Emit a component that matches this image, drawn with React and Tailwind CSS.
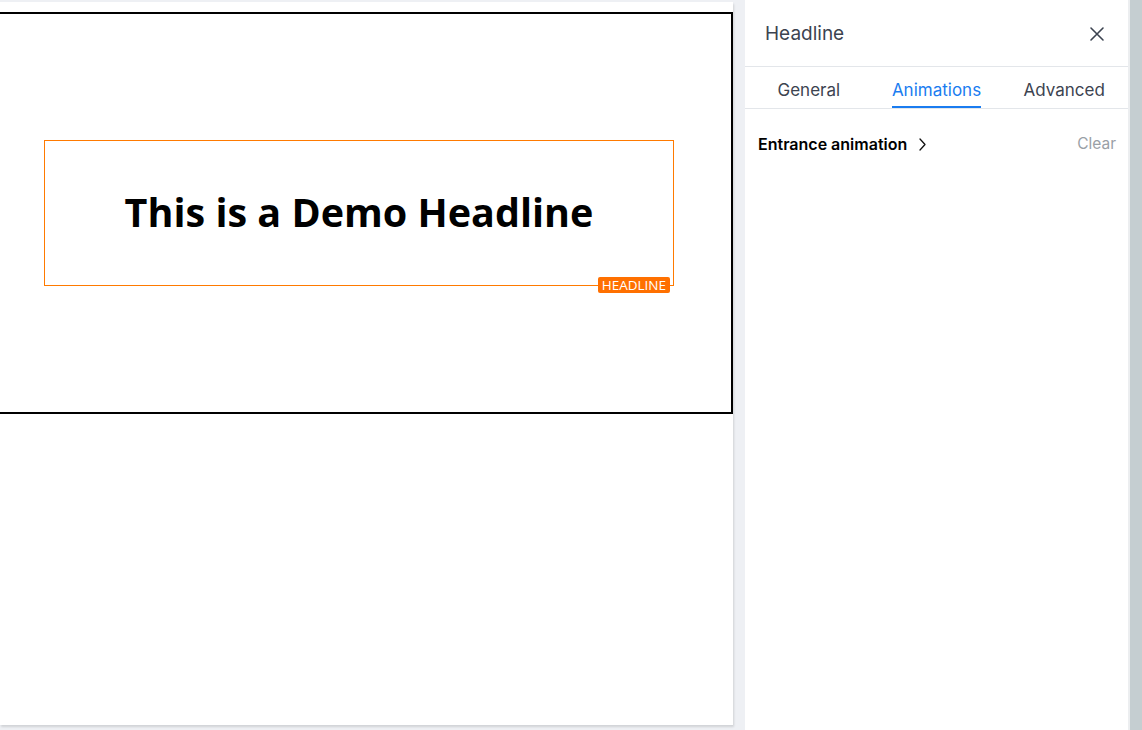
import React from 'react';

const App = () => {
  return (
    <div className="flex h-[730px] w-[1142px] overflow-hidden bg-[#eef0f4]">
      {/* Canvas area */}
      <div className="w-[745px] shrink-0 pt-[2px]">
        <div className="h-[723px] w-[733px] overflow-hidden bg-white shadow-[1px_2px_2px_rgba(0,0,0,0.12)]">
          <div className="relative ml-[-10px] mt-[10px] h-[402px] w-[743px] border-2 border-black">
            {/* Selected headline block */}
            <div className="relative ml-[52px] mt-[126px] flex h-[146px] w-[630px] items-center justify-center border border-[#ff7a00]">
              <h1 className="font-['Open_Sans',sans-serif] text-[39.5px] font-bold leading-none text-black">
                This is a Demo Headline
              </h1>
              <span className="absolute right-[3px] top-[136px] rounded-[2px] bg-[#ff7000] px-[4px] font-['Open_Sans',sans-serif] text-[13.5px] leading-[16px] text-white">
                HEADLINE
              </span>
            </div>
          </div>
        </div>
      </div>

      {/* Settings panel */}
      <div className="flex w-[383px] shrink-0 flex-col bg-white font-['Inter',sans-serif]">
        <div className="flex h-[67px] items-center justify-between border-b border-[#e3e6ea] pl-[20px] pr-[23px] pt-[2px]">
          <span className="text-[19px] text-[#3c4350]">Headline</span>
          <svg width="16" height="16" viewBox="0 0 16 16" fill="none" stroke="#3c4350" strokeWidth="1.6" strokeLinecap="round">
            <path d="M2 2l12 12M14 2L2 14" />
          </svg>
        </div>
        <div className="flex h-[42px] border-b border-[#e3e6ea]">
          {['General', 'Animations', 'Advanced'].map((t) => (
            <div key={t} className="flex flex-1 justify-center">
              <span
                className={`flex items-center border-b-2 pt-[9px] text-[17px] ${
                  t === 'Animations' ? 'border-[#1a7cf0] text-[#1a7cf0]' : 'border-transparent text-[#3c4350]'
                }`}
              >
                {t}
              </span>
            </div>
          ))}
        </div>
        <div className="flex h-[70px] items-center justify-between pl-[13px] pr-[12px]">
          <div className="flex items-center gap-[10px]">
            <span className="text-[16px] font-semibold text-black">Entrance animation</span>
            <svg width="10" height="14" viewBox="0 0 10 14" fill="none" stroke="#111" strokeWidth="1.3" strokeLinecap="round" strokeLinejoin="round">
              <path d="M3 2l5 5.5-5 5.5" />
            </svg>
          </div>
          <span className="text-[15.5px] text-[#9aa0a6]">Clear</span>
        </div>
      </div>

      {/* Scroll track */}
      <div className="w-[2px] shrink-0 bg-[#eceef0]" />
      <div className="flex-1 bg-[#c5ced1]" />
    </div>
  );
};

export default App;
